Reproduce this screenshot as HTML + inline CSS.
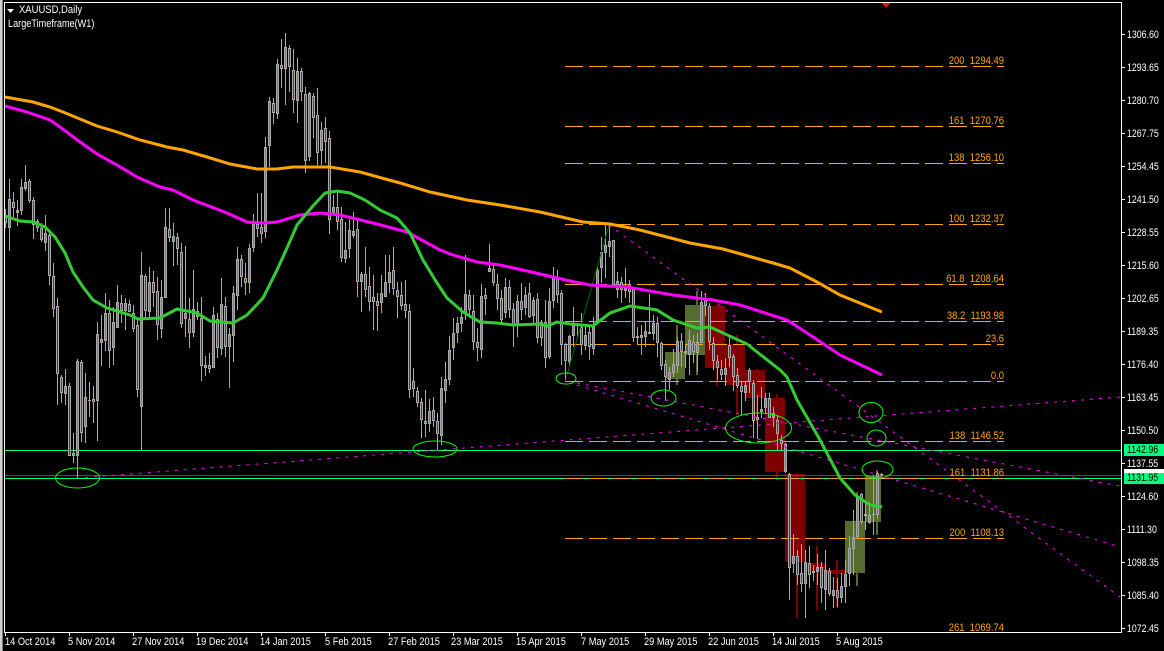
<!DOCTYPE html>
<html><head><meta charset="utf-8"><style>
html,body{margin:0;padding:0;background:#000;width:1164px;height:651px;overflow:hidden}
#w{position:relative;width:1164px;height:651px;background:#000;overflow:hidden}
svg{position:absolute;left:0;top:0}
.t{position:absolute;font:11px/12px "Liberation Sans",sans-serif;color:#fff;white-space:pre;transform:scaleX(.84);transform-origin:0 0}
.p{left:1127px;transform:scaleX(.8)}
.r{position:absolute;font:11px/12px "Liberation Sans",sans-serif;color:#ffa500;white-space:pre;text-align:right;width:90px;transform:scaleX(.86);transform-origin:100% 0}
</style></head><body><div id="w">
<svg width="1164" height="651" viewBox="0 0 1164 651">
<rect x="0" y="0" width="2" height="651" fill="#d4d0c8"/><rect x="2" y="0" width="1" height="651" fill="#808080"/>
<g shape-rendering="crispEdges">
<g fill="#800000">
<rect x="705" y="306" width="20" height="62"/><rect x="716" y="303" width="2" height="83"/>
<rect x="725" y="344" width="20" height="41"/><rect x="736" y="335" width="2" height="80"/>
<rect x="745" y="370" width="20" height="28"/><rect x="756" y="369" width="2" height="54"/>
<rect x="765" y="398" width="20" height="74"/><rect x="776" y="394" width="2" height="86"/>
<rect x="785" y="474" width="20" height="88"/><rect x="796" y="473" width="2" height="145"/>
<rect x="805" y="563" width="20" height="8"/><rect x="816" y="546" width="2" height="64"/>
<rect x="825" y="570" width="20" height="4"/><rect x="836" y="560" width="2" height="48"/>
</g>
<g fill="#556b2f">
<rect x="665" y="352" width="20" height="27"/><rect x="676" y="325" width="2" height="60"/>
<rect x="685" y="305" width="20" height="50"/><rect x="696" y="291" width="2" height="84"/>
<rect x="845" y="521" width="20" height="52"/><rect x="856" y="492" width="2" height="94"/>
<rect x="865" y="476" width="16" height="46"/><rect x="876" y="470" width="2" height="65"/>
</g>
<path d="M5 450.5H1121M5 478.5H1121" stroke="#00ff7f" fill="none"/>
<path d="M5 475.5H1121" stroke="#e01010" fill="none"/>
<path d="M565 66.5H1004M565 126.5H1004M565 163.5H1004M565 224.5H1004M565 284.5H1004M565 321.5H1004M565 344.5H1004M565 381.5H1004M565 441.5H1004M565 478.5H1004M565 538.5H1004" stroke="#ffa500" stroke-dasharray="18 6" fill="none"/>
<path id="wk" stroke="#a9a9a9" fill="none"/>
<path id="bd" stroke="#a9a9a9" stroke-width="3" fill="none"/>
<path id="rd" stroke="#e00000" fill="none"/>
<path id="gr" stroke="#22bb22" fill="none"/>
</g>
<g fill="none">
<path d="M567 375L609 225" stroke="#006400"/>
<path d="M85 477.5L1121 397M577 383L1120 486M577 385L1120 547M609 225L1120 597" stroke="#ff00ff" stroke-dasharray="3 6"/>
<polyline stroke="#ffa500" stroke-width="3" points="5,97 33,102 50,107 63,112 80,119 97,126 117,132 140,140 167,147 183,150 207,157 230,164 257,169 277,169 293,167 330,167 360,172 400,183 430,192 467,200 500,205 540,212 583,222 610,224 640,230 690,243 723,249 773,263 790,268 817,282 840,295 882,312"/>
<polyline stroke="#ff00ff" stroke-width="3" points="5,106 27,112 50,120 60,127 80,142 97,154 117,165 137,177 160,187 173,190 193,200 227,213 247,222 263,223 277,222 300,215 320,213 340,215 377,224 407,232 440,250 453,255 477,262 500,265 527,271 553,277 570,281 590,285 627,287 673,295 713,300 740,305 787,320 807,333 840,355 882,375"/>
<polyline stroke="#32cd32" stroke-width="3" points="5,216 20,221 33,222 45,227 55,237 65,253 73,272 83,287 93,300 107,308 130,315 138,319 160,318 177,309 197,313 210,321 233,323 247,315 263,298 277,270 287,248 297,225 312,207 325,193 337,191 350,193 365,200 380,210 397,218 410,233 423,260 437,283 447,298 463,312 480,322 497,323 513,325 540,324 547,326 557,322 570,324 593,326 610,313 630,306 657,310 673,320 697,328 710,327 747,344 780,370 787,377 797,400 820,440 840,478 855,495 870,505 882,507"/>
<g stroke="#00ff00">
<ellipse cx="77.5" cy="478" rx="22" ry="10"/><ellipse cx="435" cy="449" rx="22" ry="8"/><ellipse cx="566" cy="378.5" rx="10" ry="5.5"/><ellipse cx="663.5" cy="398" rx="12.5" ry="8"/><ellipse cx="758.5" cy="428" rx="33" ry="15"/><ellipse cx="871" cy="412.5" rx="12" ry="10"/><ellipse cx="876.5" cy="438" rx="9.5" ry="8"/><ellipse cx="877.5" cy="469.5" rx="15.5" ry="8.5"/>
</g>
</g>
<path d="M881 2h10l-5 6z" fill="#f01010"/>
<g shape-rendering="crispEdges" fill="none" stroke="#fff">
<path d="M4.5 2.5H1121.5V632.5H4.5Z"/>
<path d="M1122 34.5h3M1122 67.5h3M1122 100.5h3M1122 133.5h3M1122 166.5h3M1122 199.5h3M1122 232.5h3M1122 265.5h3M1122 298.5h3M1122 331.5h3M1122 364.5h3M1122 397.5h3M1122 430.5h3M1122 463.5h3M1122 496.5h3M1122 529.5h3M1122 562.5h3M1122 595.5h3M1122 628.5h3"/>
<path d="M5.5 633v3M69.5 633v3M133.5 633v3M197.5 633v3M261.5 633v3M325.5 633v3M389.5 633v3M453.5 633v3M517.5 633v3M581.5 633v3M645.5 633v3M709.5 633v3M773.5 633v3M837.5 633v3"/>
</g>
<path d="M7 9h7l-3.5 4z" fill="#fff"/>
<rect x="1124" y="469" width="40" height="5" fill="#fff"/>
<rect x="1124" y="444" width="40" height="12" fill="#00ff7f"/>
<rect x="1124" y="473" width="40" height="11" fill="#00ff7f"/>
</svg>
<div class="t" style="left:19px;top:4px;transform:scaleX(.86)">XAUUSD,Daily</div>
<div class="t" style="left:8px;top:18px;transform:scaleX(.83)">LargeTimeframe(W1)</div>
<div class="t p" style="top:29px">1306.60</div><div class="t p" style="top:62px">1293.65</div><div class="t p" style="top:95px">1280.70</div><div class="t p" style="top:128px">1267.75</div><div class="t p" style="top:161px">1254.45</div><div class="t p" style="top:194px">1241.50</div><div class="t p" style="top:227px">1228.55</div><div class="t p" style="top:260px">1215.60</div><div class="t p" style="top:293px">1202.65</div><div class="t p" style="top:326px">1189.35</div><div class="t p" style="top:359px">1176.40</div><div class="t p" style="top:392px">1163.45</div><div class="t p" style="top:425px">1150.50</div><div class="t p" style="top:458px">1137.55</div><div class="t p" style="top:491px">1124.60</div><div class="t p" style="top:524px">1111.30</div><div class="t p" style="top:557px">1098.35</div><div class="t p" style="top:590px">1085.40</div><div class="t p" style="top:623px">1072.45</div>
<div class="t p" style="top:444px;color:#000">1142.96</div><div class="t p" style="top:472px;color:#000">1131.95</div>
<div class="t" style="left:5px;top:636px">14 Oct 2014</div><div class="t" style="left:68px;top:636px">5 Nov 2014</div><div class="t" style="left:132px;top:636px">27 Nov 2014</div><div class="t" style="left:196px;top:636px">19 Dec 2014</div><div class="t" style="left:260px;top:636px">14 Jan 2015</div><div class="t" style="left:325px;top:636px">5 Feb 2015</div><div class="t" style="left:388px;top:636px">27 Feb 2015</div><div class="t" style="left:451px;top:636px">23 Mar 2015</div><div class="t" style="left:516px;top:636px">15 Apr 2015</div><div class="t" style="left:581px;top:636px">7 May 2015</div><div class="t" style="left:644px;top:636px">29 May 2015</div><div class="t" style="left:708px;top:636px">22 Jun 2015</div><div class="t" style="left:772px;top:636px">14 Jul 2015</div><div class="t" style="left:836px;top:636px">5 Aug 2015</div>
<div class="r" style="left:914px;top:55px">200  1294.49</div><div class="r" style="left:914px;top:115px">161  1270.76</div><div class="r" style="left:914px;top:152px">138  1256.10</div><div class="r" style="left:914px;top:213px">100  1232.37</div><div class="r" style="left:914px;top:273px">61.8  1208.64</div><div class="r" style="left:914px;top:310px">38.2  1193.98</div><div class="r" style="left:914px;top:333px">23.6</div><div class="r" style="left:914px;top:370px">0.0</div><div class="r" style="left:914px;top:430px">138  1146.52</div><div class="r" style="left:914px;top:467px">161  1131.86</div><div class="r" style="left:914px;top:527px">200  1108.13</div><div class="r" style="left:914px;top:622px;height:10px;overflow:hidden">261  1069.74</div>
<script>
var d="209 228 215 223 r,179 251 199 228 g,192 217 202 208 r,200 226 210 213 g,179 215 187 211 g,165 191 182 189 g,179 203 181 201 r,197 239 200 225 r,219 232 221 228 r,223 242 228 240 r,215 251 233 243 g,233 285 235 276 r,263 317 276 309 r,298 405 306 374 r,375 403 377 393 r,369 405 386 394 g,383 456 386 456 r,433 463 453 456 g,359 478 361 456 g,360 442 362 433 r,373 443 397 427 g,382 417 400 401 r,386 423 399 402 r,322 441 334 401 g,315 366 339 343 g,293 351 313 341 g,300 368 313 351 r,307 365 322 348 g,285 328 302 328 g,295 323 303 311 r,298 330 303 311 g,300 312 304 312 r,305 332 313 329 r,318 397 325 390 r,252 450 275 407 g,274 320 276 311 r,267 320 282 312 g,271 307 282 293 r,277 340 291 325 r,280 338 297 329 g,208 298 227 298 g,208 242 229 238 r,223 266 236 242 g,233 265 237 249 r,243 328 252 324 r,246 337 313 319 g,298 348 319 333 r,270 337 309 333 g,302 320 311 317 g,297 381 318 366 r,356 376 365 368 g,353 373 365 369 r,307 368 315 368 g,313 358 319 348 r,278 355 304 349 g,297 357 306 347 r,328 388 334 347 g,286 362 293 336 g,247 310 259 296 g,255 287 259 277 r,263 295 278 283 r,244 293 248 283 g,214 252 223 248 g,193 237 224 229 r,193 243 227 234 r,137 238 147 232 g,97 167 101 146 g,98 124 103 113 r,59 119 64 114 g,39 88 65 69 r,33 105 47 69 g,45 92 48 67 r,49 113 70 100 r,58 123 71 101 g,68 101 71 92 r,87 173 94 161 r,92 161 93 157 g,93 138 96 118 r,88 165 115 153 r,122 165 130 151 g,117 163 128 142 r,131 234 138 220 r,195 215 207 214 g,192 230 207 222 r,207 262 219 258 r,222 263 250 259 g,220 258 230 249 g,212 238 231 236 g,218 297 229 282 r,272 312 274 282 g,247 297 274 290 r,267 311 286 302 r,275 330 297 302 r,293 331 301 306 r,275 313 293 303 g,255 297 282 297 g,255 293 272 283 g,247 295 270 289 r,282 318 290 297 r,282 310 295 306 r,280 318 304 311 r,304 398 311 390 r,368 397 381 389 r,387 407 391 403 r,398 438 402 420 r,390 437 421 424 r,399 432 411 424 g,397 427 410 421 r,413 450 421 434 r,377 445 388 436 g,362 403 379 391 g,336 385 350 380 g,318 360 333 348 g,317 343 323 333 g,307 332 317 324 g,255 320 294 313 g,290 317 295 310 r,295 350 311 342 r,328 361 342 348 r,284 358 296 350 g,288 315 295 299 r,244 272 268 272 g,265 286 269 283 r,274 310 284 299 r,290 323 298 320 r,278 318 287 313 g,280 318 287 310 r,303 347 309 325 r,295 337 301 325 g,283 320 301 310 r,287 315 295 308 g,283 318 293 317 r,297 323 300 316 g,293 343 299 338 r,320 346 322 338 r,300 368 322 358 r,288 359 301 357 g,267 308 278 301 g,270 303 279 295 r,290 365 293 345 r,343 380 344 361 r,335 365 336 362 g,307 347 325 336 g,323 337 324 326 g,313 355 327 345 r,325 350 335 346 g,327 360 332 347 r,317 355 325 349 g,267 320 270 323 g,237 283 252 268 g,225 278 245 253 g,225 257 241 247 g,240 285 240 285 r,272 298 281 290 g,277 303 282 290 r,268 298 288 291 g,280 303 284 292 r,288 342 289 338 r,327 345 336 338 g,325 355 335 338 g,322 347 331 337 g,294 333 332 334 g,315 340 323 334 g,317 357 323 343 r,342 370 343 366 r,360 401 364 377 r,367 390 372 380 g,349 377 364 373 g,337 373 341 366 g,333 367 341 352 r,345 368 351 353 g,330 375 340 355 g,335 363 342 352 r,333 372 342 353 g,291 343 302 343 g,293 316 300 306 r,303 350 306 342 r,337 370 343 361 r,355 380 361 368 r,360 380 369 375 r,358 386 368 375 g,337 367 345 358 r,354 391 356 377 r,368 388 375 386 r,382 415 386 392 r,381 401 385 393 g,368 393 370 382 r,380 438 383 421 r,395 439 417 420 r,387 418 409 412 g,393 413 398 408 g,393 415 398 418 r,407 427 413 418 g,415 450 420 434 r,435 451 440 444 r,443 473 444 472 g,473 600 474 568 r,534 573 556 564 g,550 585 556 575 r,544 592 573 584 r,550 618 562 584 g,546 588 563 575 r,565 581 571 573 g,554 585 567 572 g,562 603 567 588 r,550 610 570 590 g,568 596 571 594 r,577 608 590 596 g,578 607 590 598 r,573 603 586 598 g,560 603 574 587 g,536 586 548 574 g,510 575 537 549 g,495 538 497 537 g,493 524 494 522 r,502 530 514 516 g,502 524 515 523 g,475 535 514 515 g,472 519 473 515 g,473 477 474 476 g".split(",");
var W="",B="",R="",G="";
d.forEach(function(s,i){var a=s.split(" "),x=5+4*i+.5,h=+a[0],l=+a[1],t=+a[2],b=+a[3],c=a[4];
W+="M"+x+" "+h+"V"+l;
if(b<=t)b=t+1;
B+="M"+x+" "+t+"V"+b;
if(b-t>2){var p="M"+x+" "+(t+1)+"V"+(b-1);if(c=="r")R+=p;else G+=p;}
});
document.getElementById("wk").setAttribute("d",W);
document.getElementById("bd").setAttribute("d",B);
document.getElementById("rd").setAttribute("d",R);
document.getElementById("gr").setAttribute("d",G);
</script>
</div></body></html>
